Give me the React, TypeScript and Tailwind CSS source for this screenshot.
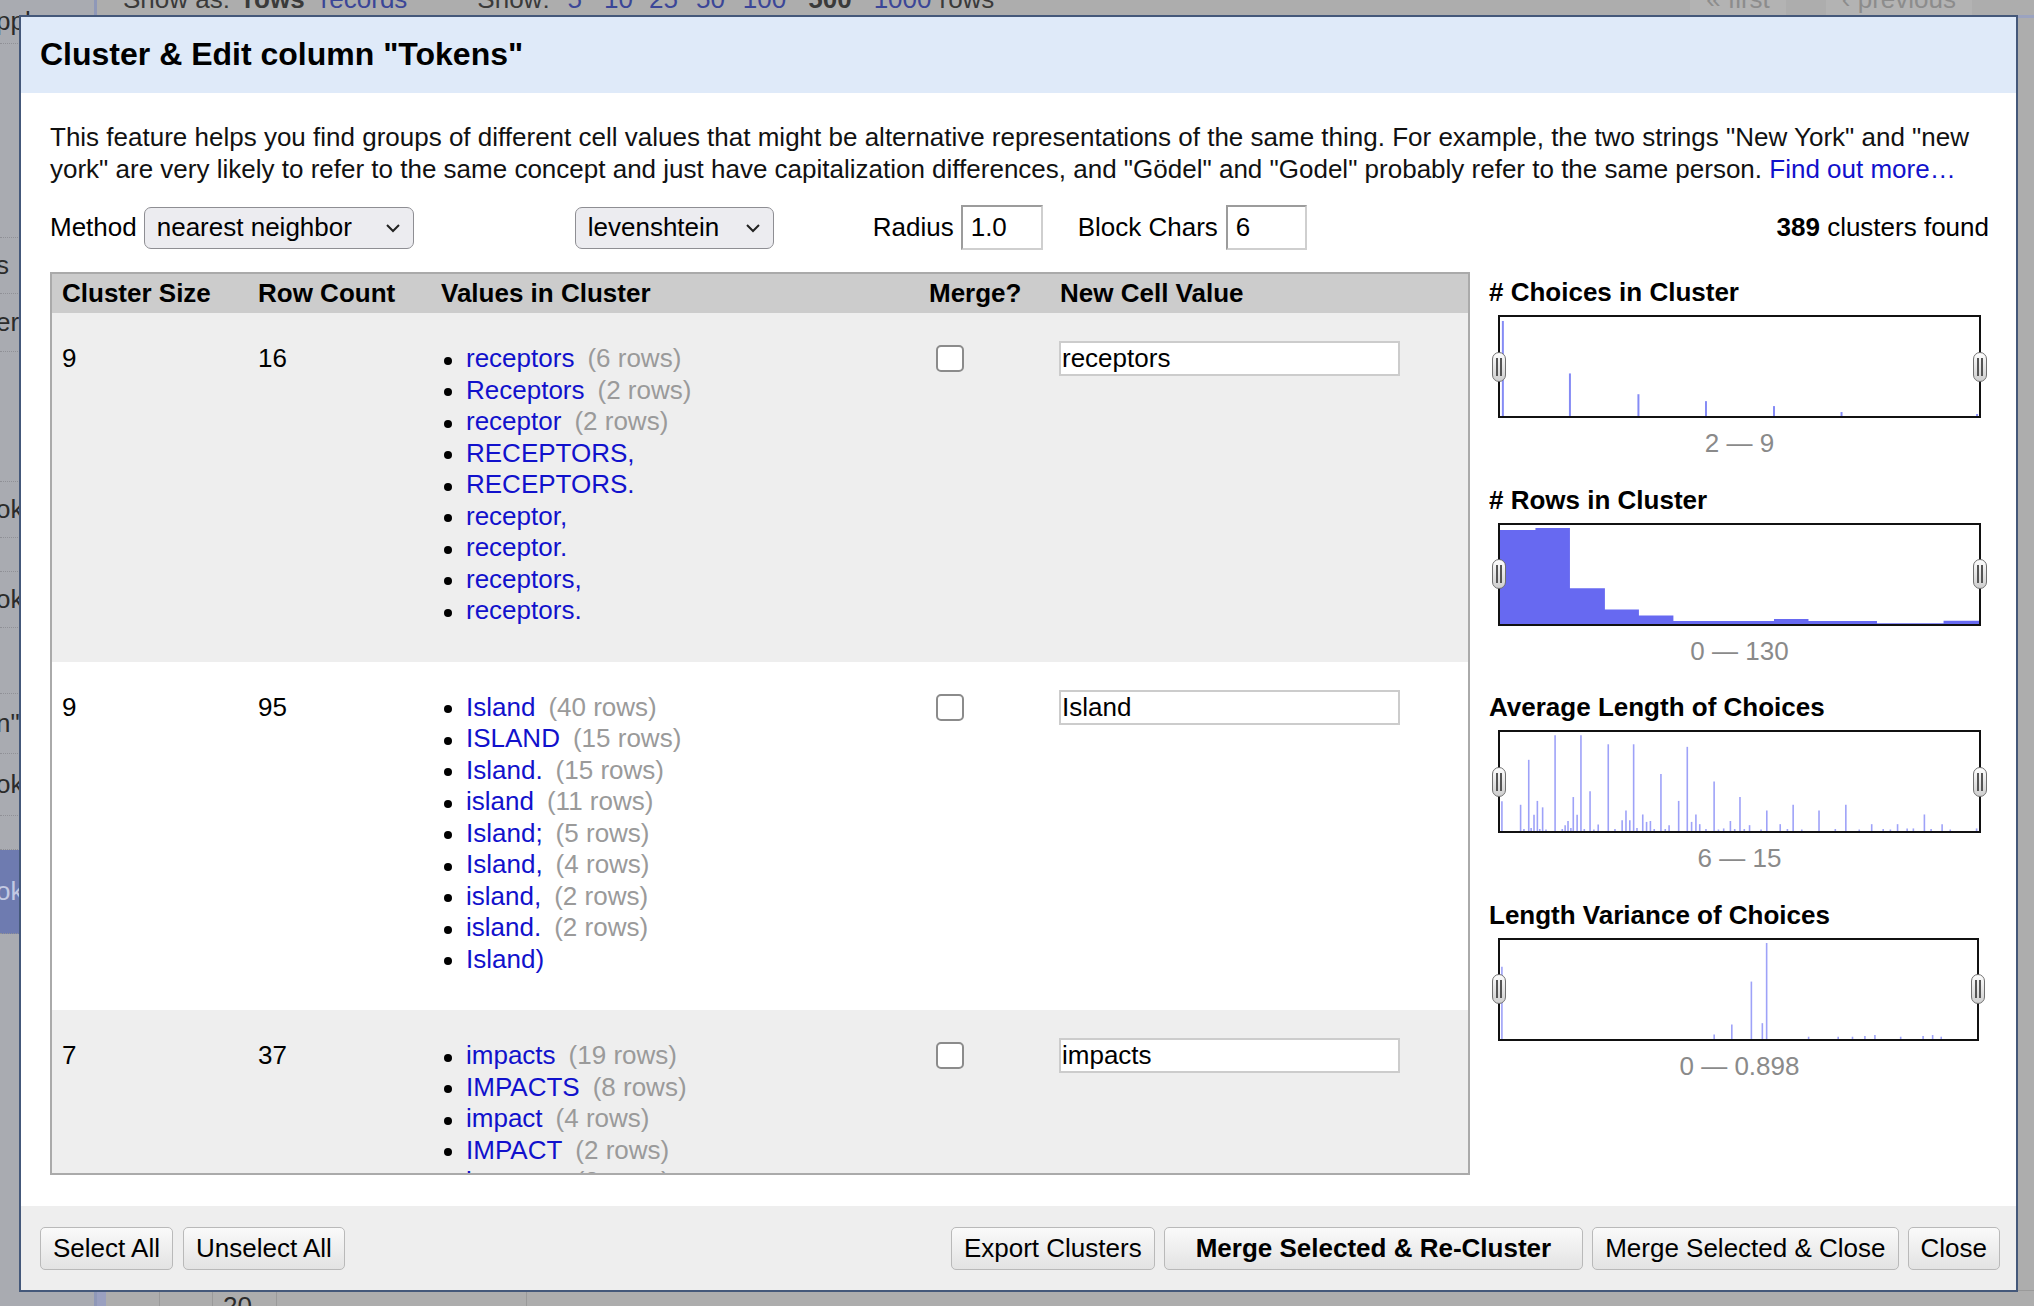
import React from 'react'

type Item = { v: string; n?: number }
type Cluster = { size: number; rows: number; value: string; items: Item[] }

const CLUSTERS: Cluster[] = [
  {
    size: 9, rows: 16, value: 'receptors', items: [
      { v: 'receptors', n: 6 }, { v: 'Receptors', n: 2 }, { v: 'receptor', n: 2 },
      { v: 'RECEPTORS,' }, { v: 'RECEPTORS.' }, { v: 'receptor,' }, { v: 'receptor.' },
      { v: 'receptors,' }, { v: 'receptors.' },
    ],
  },
  {
    size: 9, rows: 95, value: 'Island', items: [
      { v: 'Island', n: 40 }, { v: 'ISLAND', n: 15 }, { v: 'Island.', n: 15 }, { v: 'island', n: 11 },
      { v: 'Island;', n: 5 }, { v: 'Island,', n: 4 }, { v: 'island,', n: 2 }, { v: 'island.', n: 2 },
      { v: 'Island)' },
    ],
  },
  {
    size: 7, rows: 37, value: 'impacts', items: [
      { v: 'impacts', n: 19 }, { v: 'IMPACTS', n: 8 }, { v: 'impact', n: 4 }, { v: 'IMPACT', n: 2 },
      { v: 'impacts,', n: 2 }, { v: 'Impacts' }, { v: 'impacts.' },
    ],
  },
]

// [x, height] as fractions of the plot
const CHOICES: [number, number][] = [
  [0.006, 0.96], [0.146, 0.43], [0.289, 0.22], [0.43, 0.15], [0.572, 0.1], [0.713, 0.04], [0.996, 0.02],
]
const ROW_BINS: [number, number, number][] = [
  [0, 0.074, 0.95], [0.074, 0.146, 0.97], [0.146, 0.219, 0.36], [0.219, 0.29, 0.147], [0.29, 0.362, 0.085],
  [0.362, 0.572, 0.03], [0.572, 0.644, 0.05], [0.644, 0.787, 0.03], [0.787, 0.926, 0.007], [0.926, 1, 0.033],
]
const AVG_LEN: [number, number][] = [
  [0.004, 0.3], [0.043, 0.265], [0.06, 0.719], [0.071, 0.163], [0.078, 0.304], [0.089, 0.239], [0.115, 0.967],
  [0.136, 0.059], [0.142, 0.101], [0.153, 0.343], [0.161, 0.163], [0.169, 0.967], [0.188, 0.402], [0.205, 0.065],
  [0.226, 0.876], [0.255, 0.108], [0.263, 0.206], [0.271, 0.108], [0.279, 0.876], [0.298, 0.167], [0.306, 0.092],
  [0.314, 0.101], [0.336, 0.575], [0.353, 0.059], [0.373, 0.304], [0.391, 0.85], [0.4, 0.092], [0.409, 0.167],
  [0.417, 0.069], [0.447, 0.5], [0.467, 0.026], [0.481, 0.101], [0.501, 0.343], [0.521, 0.059], [0.557, 0.206],
  [0.585, 0.069], [0.612, 0.265], [0.666, 0.206], [0.722, 0.265], [0.776, 0.069], [0.83, 0.069], [0.85, 0.026],
  [0.863, 0.026], [0.886, 0.167], [0.923, 0.069], [0.995, 0.026],
  [0.05, 0.02], [0.065, 0.03], [0.083, 0.02], [0.096, 0.015], [0.13, 0.02], [0.148, 0.03], [0.176, 0.02],
  [0.196, 0.015], [0.24, 0.02], [0.286, 0.03], [0.322, 0.02], [0.345, 0.02], [0.43, 0.02], [0.456, 0.015],
  [0.49, 0.02], [0.51, 0.02], [0.545, 0.015], [0.6, 0.02], [0.63, 0.015], [0.7, 0.02], [0.75, 0.015],
  [0.8, 0.02], [0.815, 0.015], [0.9, 0.02], [0.94, 0.015],
]
const LEN_VAR: [number, number][] = [
  [0.004, 0.73], [0.449, 0.046], [0.486, 0.147], [0.527, 0.58], [0.55, 0.16], [0.559, 0.97], [0.647, 0.023],
  [0.709, 0.023], [0.739, 0.023], [0.765, 0.03], [0.786, 0.04], [0.84, 0.023], [0.887, 0.03], [0.907, 0.04],
  [0.925, 0.023],
]

function Lines({ data, color, width }: { data: [number, number][]; color: string; width: number }) {
  return (
    <svg className="block h-full w-full" viewBox="0 0 1000 100" preserveAspectRatio="none">
      {data.map(([x, h], i) => (
        <line
          key={i}
          x1={x * 1000}
          x2={x * 1000}
          y1={100}
          y2={100 - h * 100}
          stroke={color}
          strokeWidth={width}
          vectorEffect="non-scaling-stroke"
        />
      ))}
    </svg>
  )
}

function Area() {
  let d = 'M0,100'
  for (const [a, b, h] of ROW_BINS) d += ` L${a * 1000},${100 - h * 100} L${b * 1000},${100 - h * 100}`
  d += ' L1000,100 Z'
  return (
    <svg className="block h-full w-full" viewBox="0 0 1000 100" preserveAspectRatio="none">
      <path d={d} fill="#6769f1" />
    </svg>
  )
}

function Handle({ side }: { side: 'l' | 'r' }) {
  return (
    <div
      className={`absolute top-1/2 -mt-[15px] flex h-[30px] w-[14px] items-center justify-center gap-[2px] rounded-[7px] border border-[#707070] bg-linear-to-b from-[#fdfdfd] to-[#cfcfcf] ${
        side === 'l' ? '-left-[8px]' : '-right-[8px]'
      }`}
    >
      <span className="h-[18px] w-[2px] bg-[#555555]" />
      <span className="h-[18px] w-[2px] bg-[#555555]" />
    </div>
  )
}

function Facet({ title, range, narrow, children }: { title: string; range: string; narrow?: boolean; children: React.ReactNode }) {
  return (
    <div>
      <div className="h-[41px] leading-[41px] font-bold">{title}</div>
      <div className={`relative ml-[9px] mt-[2px] h-[103px] border-2 border-[#111111] bg-white ${narrow ? 'w-[481px]' : 'w-[483px]'}`}>
        {children}
        <Handle side="l" />
        <Handle side="r" />
      </div>
      <div className="ml-[9px] mt-[10px] w-[483px] text-center leading-[31.5px] text-[#8a8a8a]">{range}</div>
    </div>
  )
}

function Select({ label, w }: { label: string; w: string }) {
  return (
    <div className={`flex h-[42px] items-center justify-between rounded-[7px] border border-[#8e8e93] bg-[#ececf0] pl-[12px] pr-[12px] ${w}`}>
      <span>{label}</span>
      <svg width="16" height="10" viewBox="0 0 16 10">
        <polyline points="2,2 8,8 14,2" fill="none" stroke="#222" strokeWidth="2" />
      </svg>
    </div>
  )
}

function TextBox({ value, w }: { value: string; w: string }) {
  return (
    <div className={`h-[45px] border-2 border-[#cfcfcf] border-l-[#9c9c9c] border-t-[#9c9c9c] bg-white pl-[8px] leading-[41px] ${w}`}>
      {value}
    </div>
  )
}

function ClusterRow({ c, odd }: { c: Cluster; odd: boolean }) {
  return (
    <div className={`flex items-start pt-[30px] pb-[35px] leading-[31.5px] ${odd ? 'bg-[#eeeeee]' : 'bg-white'}`}>
      <div className="w-[196px] pl-[10px]">{c.size}</div>
      <div className="w-[183px] pl-[10px]">{c.rows}</div>
      <ul className="w-[488px]">
        {c.items.map((it, i) => (
          <li key={i} className="flex items-center whitespace-nowrap">
            <span className="ml-[13px] mr-[14px] mt-[4px] h-[8px] w-[8px] shrink-0 rounded-full bg-black" />
            <span className="text-[#1111cc]">{it.v}</span>
            {it.n !== undefined && <span className="ml-[13px] text-[#9a9a9a]">({it.n} rows)</span>}
          </li>
        ))}
      </ul>
      <div className="w-[131px] pl-[17px] pt-[2px]">
        <div className="h-[27px] w-[28px] rounded-[5px] border-[2.5px] border-[#8b8b8b] bg-white" />
      </div>
      <div className="-mt-[2px] flex-1 pl-[9px]">
        <div className="h-[35px] w-[341px] border-2 border-[#cccccc] bg-white pl-[1px] leading-[31px]">{c.value}</div>
      </div>
    </div>
  )
}

function Btn({ children, bold, extra }: { children: React.ReactNode; bold?: boolean; extra?: string }) {
  return (
    <button
      className={`h-[43px] rounded-[5px] border-[1.5px] border-[#b9b9b9] bg-linear-to-b from-[#fafafa] to-[#e3e3e3] leading-[40px] text-black ${
        bold ? 'px-[31px] font-bold' : 'px-[12px]'
      } ${extra ?? ''}`}
    >
      {children}
    </button>
  )
}

// tails of the facet / history panel that peek out left of the dialog
const SIDE: { h: string; t: string; blue?: boolean }[] = [
  { h: 'h-[44px]', t: 'pply' },
  { h: 'h-[194px]', t: '' },
  { h: 'h-[56px]', t: 's' },
  { h: 'h-[58px]', t: 'er' },
  { h: 'h-[130px]', t: '' },
  { h: 'h-[56px]', t: 'ok' },
  { h: 'h-[34px]', t: '' },
  { h: 'h-[56px]', t: 'ok' },
  { h: 'h-[66px]', t: '' },
  { h: 'h-[60px]', t: 'n")' },
  { h: 'h-[62px]', t: 'ok' },
  { h: 'h-[34px]', t: '' },
  { h: 'h-[84px]', t: 'ok', blue: true },
]

function Backdrop() {
  return (
    <div className="flex h-full">
      <div className="flex w-[97px] shrink-0 flex-col border-r-[3px] border-[#8f98b8] bg-[#a9abb1] text-[#2b2b2b]">
        {SIDE.map((s, i) => (
          <div
            key={i}
            className={`flex items-center border-b border-dotted border-[#8f9096] ${s.h} ${s.blue ? 'bg-[#6e7bb0] text-[#c3c9e2]' : ''}`}
          >
            <div className="-ml-[4px] whitespace-nowrap">{s.t}</div>
          </div>
        ))}
      </div>
      <div className="flex flex-1 flex-col">
        <div className="flex h-[15px] overflow-hidden text-[#3a3a3a]">
          <div className="-mt-[16px] flex leading-[30px] whitespace-nowrap">
            <span className="ml-[26px]">Show as:</span>
            <span className="ml-[14px] font-bold">rows</span>
            <span className="ml-[16px] text-[#3b4697]">records</span>
            <span className="ml-[70px]">Show:</span>
            <span className="ml-[18px] text-[#3b4697]">5</span>
            <span className="ml-[22px] text-[#3b4697]">10</span>
            <span className="ml-[16px] text-[#3b4697]">25</span>
            <span className="ml-[18px] text-[#3b4697]">50</span>
            <span className="ml-[18px] text-[#3b4697]">100</span>
            <span className="ml-[22px] font-bold">500</span>
            <span className="ml-[22px] text-[#3b4697]">1000</span>
            <span className="ml-[8px]">rows</span>
          </div>
          <div className="ml-auto mr-[62px] flex gap-[40px] -mt-[16px] leading-[30px] text-[#8c8c8c]">
            <span className="bg-[#b3b3b3] px-[16px]">« first</span>
            <span className="bg-[#b3b3b3] px-[16px]">‹ previous</span>
          </div>
        </div>
        <div className="h-[3px] bg-[#9ba3c0]" />
        <div className="flex-1" />
        <div className="flex h-[16px] overflow-hidden border-t border-[#9a9a9a] text-[#2b2b2b]">
          <div className="w-[9px] bg-[#9aa0c0]" />
          <div className="w-[54px] border-r border-[#9a9a9a]" />
          <div className="w-[53px] border-r border-[#9a9a9a]" />
          <div className="w-[64px] border-r border-[#9a9a9a] pl-[10px] leading-[30px]">20</div>
          <div className="w-[250px] border-r border-[#9a9a9a]" />
        </div>
      </div>
    </div>
  )
}

function Dialog() {
  return (
    <div className="absolute left-[19px] top-[15px] flex h-[1277px] w-[1999px] flex-col border-2 border-[#44587a] bg-white">
      <div className="h-[76px] shrink-0 bg-[#dfeaf9] pl-[19px] pt-[20px] text-[32px] leading-[34px] font-bold">
        Cluster &amp; Edit column "Tokens"
      </div>

      <div className="flex h-[1113px] shrink-0 flex-col pl-[29px] pr-[27px] pt-[28px]">
        <div className="leading-[32px] text-[#111111]">
          <div className="whitespace-nowrap">
            This feature helps you find groups of different cell values that might be alternative representations of the same thing. For example, the two strings "New York" and "new
          </div>
          <div className="whitespace-nowrap">
            york" are very likely to refer to the same concept and just have capitalization differences, and "Gödel" and "Godel" probably refer to the same person.{' '}
            <span className="text-[#1111cc]">Find out more…</span>
          </div>
        </div>

        <div className="mt-[20px] flex h-[45px] items-center whitespace-nowrap">
          <span>Method</span>
          <div className="ml-[7px]">
            <Select label="nearest neighbor" w="w-[270px]" />
          </div>
          <div className="ml-[161px]">
            <Select label="levenshtein" w="w-[199px]" />
          </div>
          <span className="ml-[99px]">Radius</span>
          <div className="ml-[7px]">
            <TextBox value="1.0" w="w-[82px]" />
          </div>
          <span className="ml-[35px]">Block Chars</span>
          <div className="ml-[8px]">
            <TextBox value="6" w="w-[81px]" />
          </div>
          <span className="ml-auto">
            <b>389</b> clusters found
          </span>
        </div>

        <div className="mt-[22px] flex gap-[19px]">
          <div className="flex h-[903px] w-[1420px] shrink-0 flex-col overflow-hidden border-2 border-[#aaaaaa]">
            <div className="flex h-[39px] shrink-0 items-center bg-[#cccccc] font-bold">
              <div className="w-[196px] pl-[10px]">Cluster Size</div>
              <div className="w-[183px] pl-[10px]">Row Count</div>
              <div className="w-[488px] pl-[10px]">Values in Cluster</div>
              <div className="w-[131px] pl-[10px]">Merge?</div>
              <div className="flex-1 pl-[10px]">New Cell Value</div>
            </div>
            <div className="flex-1 overflow-hidden">
              {CLUSTERS.map((c, i) => (
                <ClusterRow key={i} c={c} odd={i % 2 === 0} />
              ))}
            </div>
          </div>

          <div className="flex w-[500px] flex-col gap-[20px]">
            <Facet title="# Choices in Cluster" range="2 — 9">
              <Lines data={CHOICES} color="#858bf5" width={2} />
            </Facet>
            <Facet title="# Rows in Cluster" range="0 — 130">
              <Area />
            </Facet>
            <Facet title="Average Length of Choices" range="6 — 15">
              <Lines data={AVG_LEN} color="#9ea2f8" width={1.6} />
            </Facet>
            <Facet title="Length Variance of Choices" range="0 — 0.898" narrow>
              <Lines data={LEN_VAR} color="#9ea2f8" width={1.6} />
            </Facet>
          </div>
        </div>
      </div>

      <div className="flex h-[84px] shrink-0 items-center bg-[#eeeeee] pl-[19px] pr-[16px] whitespace-nowrap">
        <Btn>Select All</Btn>
        <Btn extra="ml-[10px]">Unselect All</Btn>
        <div className="ml-auto flex gap-[9px]">
          <Btn>Export Clusters</Btn>
          <Btn bold>Merge Selected &amp; Re-Cluster</Btn>
          <Btn>Merge Selected &amp; Close</Btn>
          <Btn>Close</Btn>
        </div>
      </div>
    </div>
  )
}

export default function App() {
  return (
    <div className="relative h-[1306px] w-[2034px] overflow-hidden bg-[#adadad] font-['Liberation_Sans',Arial,sans-serif] text-[26px] text-black">
      <Backdrop />
      <Dialog />
    </div>
  )
}
